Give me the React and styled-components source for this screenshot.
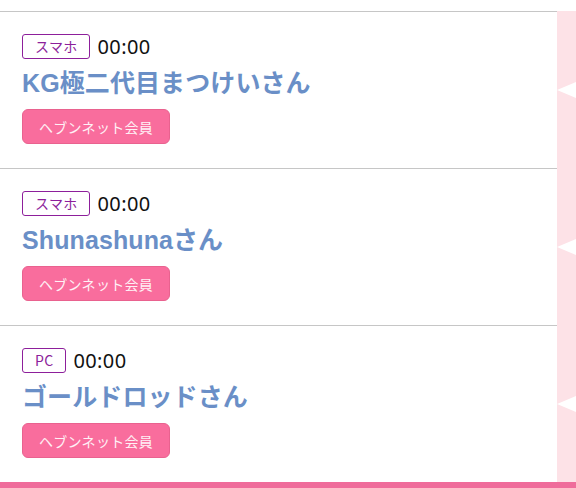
import React from 'react';
import styled, { createGlobalStyle } from 'styled-components';

const GlobalStyle = createGlobalStyle`
  html, body {
    margin: 0;
    padding: 0;
    background: #fff;
  }
  body {
    font-family: "Noto Sans CJK JP", "Liberation Sans", sans-serif;
  }
`;

const Page = styled.div`
  width: 576px;
  height: 488px;
  display: flex;
  flex-direction: column;
  overflow: hidden;
  background: #fff;
`;

const TopStrip = styled.div`
  height: 11px;
  flex: none;
`;

const Row = styled.div`
  display: flex;
  height: 157px;
  flex: none;
`;

const Card = styled.div`
  flex: 1;
  border-top: 1px solid #c6c6c6;
  padding: 22px 22px 0;
  display: flex;
  flex-direction: column;
  align-items: flex-start;
`;

const Peek = styled.div`
  width: 19px;
  background: #fde2e7;
  display: flex;
  align-items: center;
  overflow: hidden;
`;

const Arrow = styled.span`
  width: 0;
  height: 0;
  border-top: 11px solid transparent;
  border-bottom: 11px solid transparent;
  border-right: 26px solid #fff;
  flex: none;
`;

const Meta = styled.div`
  display: flex;
  align-items: center;
  gap: 7px;
  height: 25px;
`;

const Device = styled.span`
  box-sizing: border-box;
  height: 25px;
  padding: 0 12px;
  border: 1px solid #8d1f9b;
  border-radius: 3px;
  color: #8d1f9b;
  font-size: 14px;
  line-height: 23px;
  letter-spacing: 0.3px;
`;

const Time = styled.span`
  font-family: "Noto Sans", "Noto Sans CJK JP", sans-serif;
  font-size: 20px;
  letter-spacing: 0.4px;
  color: #111;
  line-height: 25px;
`;

const Name = styled.div`
  margin-top: 9px;
  font-family: "Liberation Sans", "Noto Sans CJK JP", sans-serif;
  font-size: 25px;
  font-weight: 700;
  color: #6a8fc7;
  line-height: 31px;
  letter-spacing: 0.1px;
`;

const MemberButton = styled.button`
  margin-top: 10px;
  box-sizing: border-box;
  height: 35px;
  padding: 0 16px;
  border: 1px solid #e9628f;
  border-radius: 6px;
  background: #f96d9d;
  color: #fff0f5;
  font-family: "Noto Sans CJK JP", sans-serif;
  font-size: 14px;
  letter-spacing: 0.3px;
  cursor: pointer;
`;

const BottomBar = styled.div`
  flex: 1;
  background: #ef6c9b;
`;

const members = [
  { device: 'スマホ', time: '00:00', name: 'KG極二代目まつけいさん' },
  { device: 'スマホ', time: '00:00', name: 'Shunashunaさん' },
  { device: 'PC', time: '00:00', name: 'ゴールドロッドさん' },
];

export default function App() {
  return (
    <Page>
      <GlobalStyle />
      <TopStrip />
      {members.map((m, i) => (
        <Row key={i}>
          <Card>
            <Meta>
              <Device>{m.device}</Device>
              <Time>{m.time}</Time>
            </Meta>
            <Name>{m.name}</Name>
            <MemberButton>ヘブンネット会員</MemberButton>
          </Card>
          <Peek>
            <Arrow />
          </Peek>
        </Row>
      ))}
      <BottomBar />
    </Page>
  );
}
